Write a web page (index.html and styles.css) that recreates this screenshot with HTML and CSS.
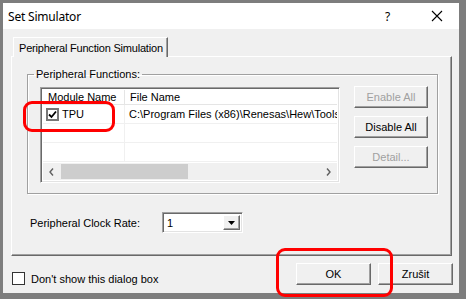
FILE: index.html
```
<!DOCTYPE html>
<html>
<head>
<meta charset="utf-8">
<link rel="stylesheet" href="styles.css">
</head>
<body>
<div class="window">
  <div class="titlebar">
    <span class="title">Set Simulator</span>
    <span class="help">?</span>
    <span class="close"><svg width="12" height="12" viewBox="0 0 12 12"><path d="M1 1L11 11M11 1L1 11" stroke="#000" stroke-width="1.1"/></svg></span>
  </div>
  <div class="content">
    <div class="tabs"><div class="tab">Peripheral Function Simulation</div></div>
    <div class="panel">
      <fieldset class="group">
        <legend>Peripheral Functions:</legend>
        <div class="group-body">
          <div class="list">
            <div class="list-head">
              <div class="col c1">Module Name</div>
              <div class="col c2">File Name</div>
            </div>
            <div class="rows">
              <div class="row">
                <div class="cell c1"><span class="chk checked"><svg width="9" height="9" viewBox="0 0 9 9"><path d="M1 4.5L3.5 7L8 1.5" fill="none" stroke="#000" stroke-width="1.8"/></svg></span>TPU</div>
                <div class="cell c2">C:\Program Files (x86)\Renesas\Hew\Tools\</div>
              </div>
              <div class="row"><div class="cell c1"></div><div class="cell c2"></div></div>
              <div class="row"><div class="cell c1"></div><div class="cell c2"></div></div>
            </div>
            <div class="hscroll">
              <span class="arrow"><svg width="5" height="8" viewBox="0 0 5 8"><path d="M4 0.5L1 4L4 7.5" fill="none" stroke="#606060" stroke-width="1.4"/></svg></span>
              <div class="track"><div class="thumb"></div></div>
              <span class="arrow"><svg width="5" height="8" viewBox="0 0 5 8"><path d="M1 0.5L4 4L1 7.5" fill="none" stroke="#606060" stroke-width="1.4"/></svg></span>
            </div>
          </div>
          <div class="side-buttons">
            <div class="btn disabled">Enable All</div>
            <div class="btn">Disable All</div>
            <div class="btn disabled">Detail...</div>
          </div>
        </div>
      </fieldset>
      <div class="clock-row">
        <span class="clock-label">Peripheral Clock Rate:</span>
        <div class="combo">
          <span class="combo-val">1</span>
          <span class="combo-btn"><svg width="7" height="4" viewBox="0 0 7 4"><path d="M0 0H7L3.5 4Z" fill="#000"/></svg></span>
        </div>
      </div>
    </div>
    <div class="footer">
      <label class="dont"><span class="chk plain"></span>Don't show this dialog box</label>
      <div class="btn ok">OK</div>
      <div class="btn cancel">Zrušit</div>
    </div>
  </div>
  <div class="mark mark-tpu"></div>
  <div class="mark mark-ok"></div>
</div>
</body>
</html>
```
FILE: styles.css
```
*{box-sizing:border-box;}
html,body{margin:0;padding:0;}
body{
  width:466px;height:299px;overflow:hidden;
  background:#7d7d7d;
  font-family:"Liberation Sans",Arial,sans-serif;
  font-size:11px;color:#000;
}
.window{
  position:relative;
  margin:3px 0 0 3px;
  width:456px;height:290px;
  background:#f0f0f0;
  display:flex;flex-direction:column;
}
.titlebar{
  height:26px;background:#fff;
  display:flex;align-items:center;
  padding-left:5px;
  font-family:"Noto Sans","Open Sans",sans-serif;
  font-size:12px;
}
.title{flex:1;letter-spacing:-0.2px;}
.help{width:10px;margin-right:36px;font-size:12px;}
.close{width:12px;height:12px;margin-right:16px;display:flex;}
.content{flex:1;display:flex;flex-direction:column;padding:8px 0 0 8px;}
.tabs{display:flex;height:19px;padding-left:2px;}
.tab{
  width:155px;height:20px;
  background:#f0f0f0;
  border-top:1px solid #fff;border-left:1px solid #fff;
  border-right:1px solid #696969;
  box-shadow:inset -1px 0 #a0a0a0;
  padding:4px 0 0 5px;
  position:relative;z-index:1;
  white-space:nowrap;
  letter-spacing:-0.2px;
}
.panel{
  width:441px;height:200px;
  border-top:1px solid #fff;border-left:1px solid #fff;
  border-right:1px solid #696969;border-bottom:1px solid #696969;
  box-shadow:inset -1px -1px #a0a0a0;
  padding:11px 0 0 15px;
}
.group{
  margin:0;
  width:411px;height:126px;
  border:1px solid #a0a0a0;
  box-shadow:inset 1px 1px #fff,1px 1px #fff;
  padding:5px 0 0 12px;
}
.group legend{padding:0 2px;margin-left:-6px;line-height:13px;}
.group-body{display:flex;align-items:flex-start;}
.list{
  width:300px;height:96px;margin-top:1px;
  border:1px solid;border-color:#a0a0a0 #fff #fff #a0a0a0;
  box-shadow:inset 1px 1px #696969,inset -1px -1px #e3e3e3;
  background:#fff;padding:2px;
  display:flex;flex-direction:column;
  overflow:hidden;
}
.list-head{display:flex;height:15px;border-bottom:1px solid #e5e5e5;flex:none;}
.col{padding-left:5px;line-height:14px;border-right:1px solid #e5e5e5;white-space:nowrap;}
.c1{width:82px;flex:none;}
.c2{flex:1;border-right:none;overflow:hidden;white-space:nowrap;}
.rows{flex:1;overflow:hidden;}
.row{display:flex;height:19px;border-bottom:1px solid #f0f0f0;}
.cell{display:flex;align-items:center;padding-left:5px;}
.row .c1{border-right:1px solid #f0f0f0;padding-left:3px;}
.row .c2{padding-left:4px;}
.chk{
  display:inline-flex;align-items:center;justify-content:center;
  width:13px;height:13px;background:#fff;
  border:1px solid #707070;margin-right:3px;
}
.chk.checked{border:2px solid #777;}
.hscroll{height:17px;background:#f0f0f0;display:flex;align-items:center;flex:none;}
.arrow{width:17px;display:flex;justify-content:center;}
.track{flex:1;height:100%;display:flex;align-items:center;}
.thumb{width:127px;height:15px;background:#cdcdcd;margin-left:1px;}
.side-buttons{display:flex;flex-direction:column;gap:8px;margin-left:14px;}
.btn{
  width:74px;height:22px;
  display:flex;align-items:center;justify-content:center;
  background:#f0f0f0;
  border:1px solid;border-color:#fff #696969 #696969 #fff;
  box-shadow:inset -1px -1px #a0a0a0;
}
.btn.disabled{color:#a0a0a0;}
.clock-row{display:flex;align-items:center;margin-top:18px;padding-left:3px;}
.clock-label{width:132px;}
.combo{
  width:81px;height:21px;background:#fff;
  border:1px solid;border-color:#a0a0a0 #fff #fff #a0a0a0;
  box-shadow:inset 1px 1px #696969,inset -1px -1px #e3e3e3;
  display:flex;align-items:center;padding:2px;
}
.combo-val{flex:1;padding-left:2px;}
.combo-btn{
  width:17px;height:100%;display:flex;align-items:center;justify-content:center;
  background:#f0f0f0;
  border:1px solid;border-color:#fff #696969 #696969 #fff;
  box-shadow:inset -1px -1px #a0a0a0;
}
.footer{display:flex;align-items:flex-end;height:29px;padding-left:1px;}
.dont{display:flex;align-items:center;width:284px;}
.chk.plain{border:1px solid #333;margin-right:6px;margin-bottom:0;}
.btn.ok{width:75px;margin-right:7px;}
.btn.cancel{width:75px;}
.mark{position:absolute;border:3px solid #f00;border-radius:9px;}
.mark-tpu{left:20px;top:98px;width:92px;height:31px;}
.mark-ok{left:273px;top:245px;width:117px;height:49px;}
```
